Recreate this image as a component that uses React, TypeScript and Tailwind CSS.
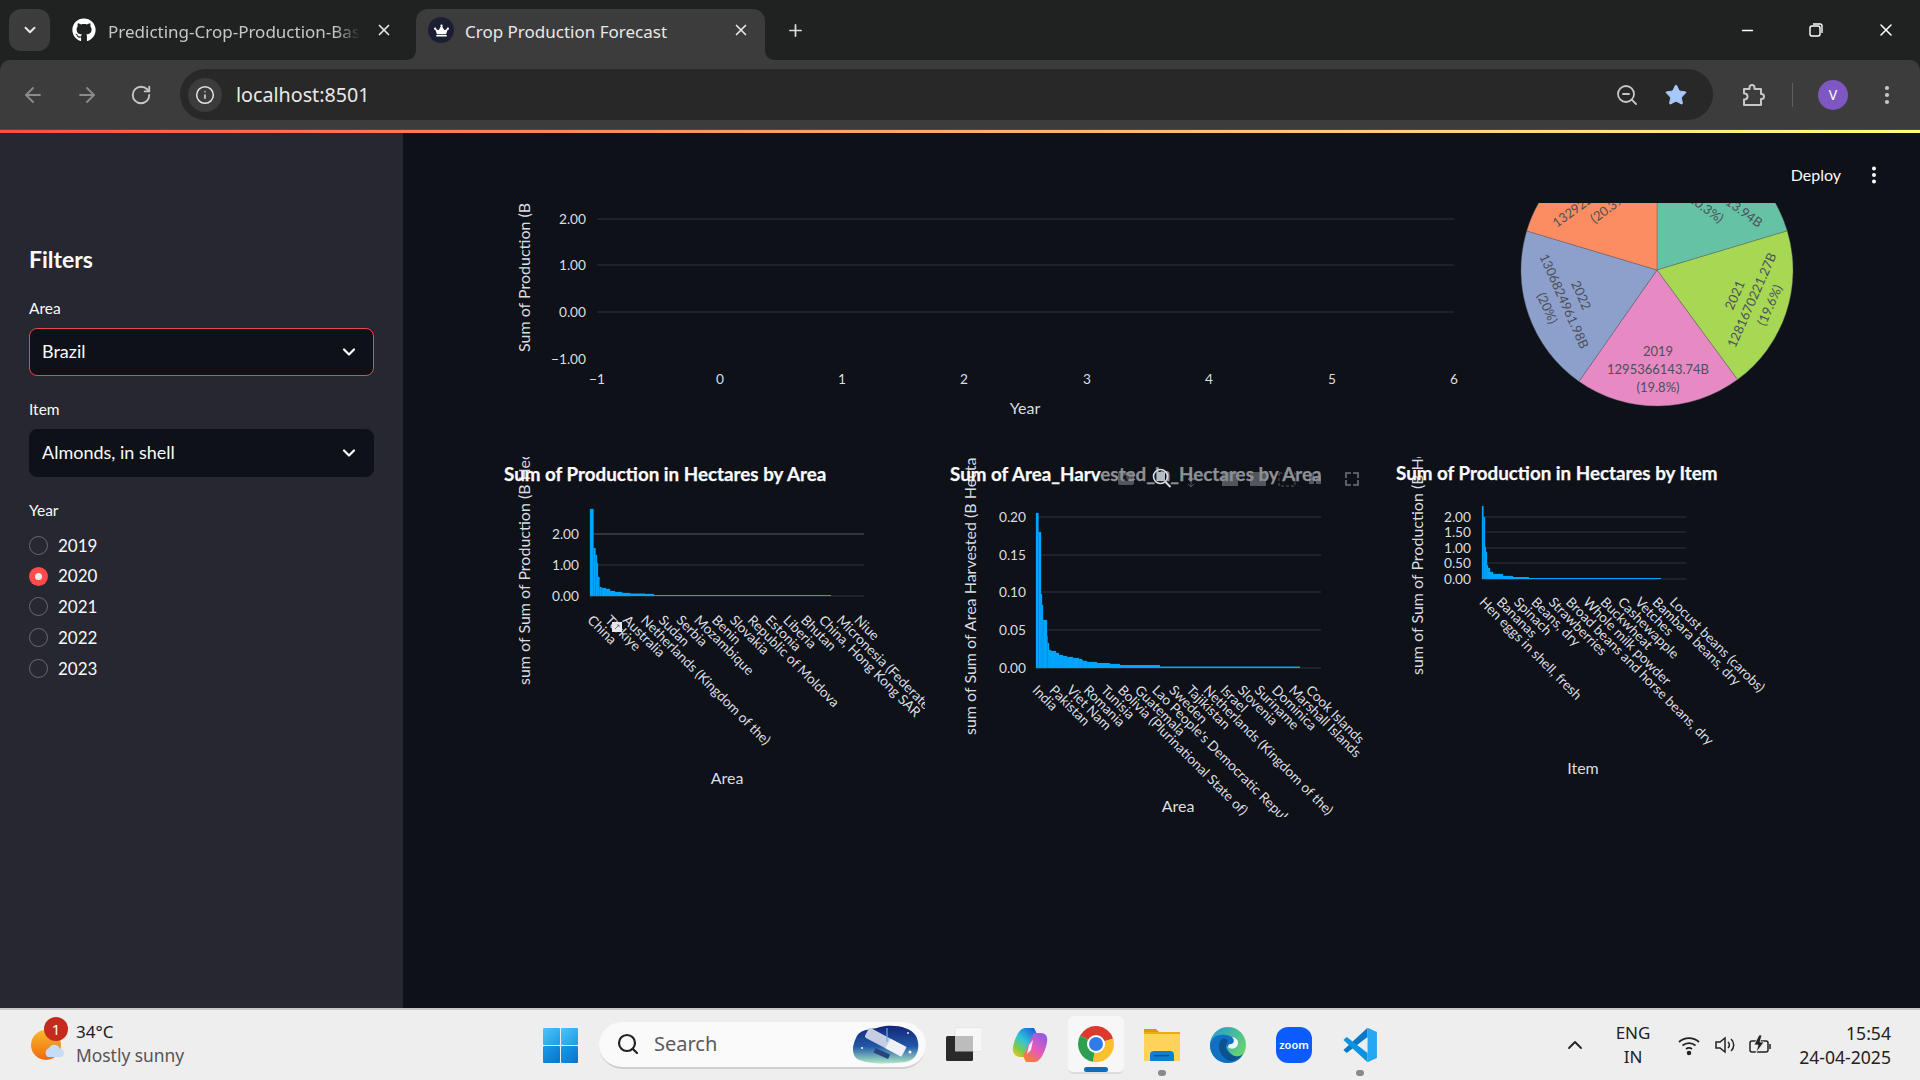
import React from "react";
import { ChevronDown, X, Plus, ArrowLeft, ArrowRight, RotateCw, Info, ZoomOut, Star, MoreVertical, Minus, Search, ChevronUp } from "lucide-react";
import { FaGithub, FaCrown } from "react-icons/fa";

const st = "font-['Lato',sans-serif]";
const ui = "font-['Noto_Sans',sans-serif]";
const tick = `fill-[#dcdde0] text-[13.7px] ${st}`;
const axis = `fill-[#dcdde0] text-[16px] ${st}`;
const title = `fill-[#fafafa] stroke-[#fafafa] [stroke-width:0.25px] text-[18.8px] font-bold ${st}`;

function YTicks({ x, x1, x2, items }: { x: number; x1: number; x2: number; items: [string, number][] }) {
  return (
    <>
      {items.map(([t, y]) => (
        <g key={t}>
          <line x1={x1} x2={x2} y1={y} y2={y} stroke="#31333c" strokeWidth="1" />
          <text x={x} y={y + 5} textAnchor="end" className={tick}>{t}</text>
        </g>
      ))}
    </>
  );
}

function XLabels({ labels, x, y, step }: { labels: string[]; x: number; y: number; step: number }) {
  return (
    <>
      {labels.map((l, i) => {
        const px = x + i * step;
        return (
          <text key={l} x={px} y={y} transform={`rotate(45 ${px} ${y})`} className={tick}>{l}</text>
        );
      })}
    </>
  );
}

function Bars({ x0, base, steps }: { x0: number; base: number; steps: [number, number][] }) {
  let prev = x0;
  return (
    <>
      {steps.map(([xe, top], i) => {
        const r = (
          <rect key={i} x={prev} y={top} width={xe - prev} height={base - top} fill="#00a6ff" stroke="#0a94e4" strokeWidth={xe - prev < 12 ? 0.3 : 0} />
        );
        prev = xe;
        return r;
      })}
    </>
  );
}

function YTitle({ x, y, text }: { x: number; y: number; text: string }) {
  return <text x={x} y={y} transform={`rotate(-90 ${x} ${y})`} className={axis}>{text}</text>;
}

function LineChart() {
  const xs = [597, 720, 842, 964, 1087, 1209, 1332, 1454];
  return (
    <svg viewBox="490 203 990 217" className="w-[990px] h-[217px] shrink-0">
      <YTicks x={586} x1={597} x2={1454} items={[["2.00", 219], ["1.00", 265], ["0.00", 312]]} />
      <text x={586} y={364} textAnchor="end" className={tick}>−1.00</text>
      {xs.map((x, i) => (
        <text key={x} x={x} y={384} textAnchor="middle" className={tick}>{i === 0 ? "−1" : i - 1}</text>
      ))}
      <text x={1025} y={414} textAnchor="middle" className={axis}>Year</text>
      <YTitle x={530} y={352} text="Sum of Production (B" />
    </svg>
  );
}

function polar(a: number, r = 136) {
  const t = (a * Math.PI) / 180;
  return [1657 + r * Math.sin(t), 270 - r * Math.cos(t)];
}
function Slice({ a, b, fill }: { a: number; b: number; fill: string }) {
  const [x1, y1] = polar(a);
  const [x2, y2] = polar(b);
  return <path d={`M1657 270L${x1} ${y1}A136 136 0 0 1 ${x2} ${y2}Z`} fill={fill} stroke="#5b6068" strokeWidth="0.4" />;
}
function PL({ x, y, r, t }: { x: number; y: number; r: number; t: string }) {
  return (
    <text x={x} y={y} textAnchor="middle" transform={`rotate(${r} ${x} ${y})`} className={`fill-[#4c5058] text-[13px] ${st}`}>{t}</text>
  );
}

function PieChart() {
  return (
    <svg viewBox="1480 203 340 217" className="w-[340px] h-[217px] shrink-0">
      <Slice a={0} b={73.3} fill="#66c2a5" />
      <Slice a={73.3} b={143.7} fill="#a6d854" />
      <Slice a={143.7} b={215} fill="#e78ac3" />
      <Slice a={215} b={286.7} fill="#8da0cb" />
      <Slice a={286.7} b={360} fill="#fc8d62" />
      <PL x={1717} y={198} r={36} t="1329220513.94B" />
      <PL x={1702} y={211} r={36} t="(20.3%)" />
      <PL x={1598} y={198} r={-36} t="1329220513.94B" />
      <PL x={1612} y={211} r={-36} t="(20.3%)" />
      <PL x={1658} y={356} r={0} t="2019" />
      <PL x={1658} y={374} r={0} t="1295366143.74B" />
      <PL x={1658} y={392} r={0} t="(19.8%)" />
      <PL x={1577} y={297} r={66} t="2022" />
      <PL x={1560} y={303} r={66} t="1306824961.98B" />
      <PL x={1543} y={310} r={66} t="(20%)" />
      <PL x={1739} y={297} r={-66} t="2021" />
      <PL x={1756} y={302} r={-66} t="1281670221.27B" />
      <PL x={1774} y={307} r={-66} t="(19.6%)" />
    </svg>
  );
}

function AreaChartA() {
  return (
    <svg viewBox="490 457 435 360" className="w-[435px] h-[360px] shrink-0">
      <YTitle x={530} y={685} text="sum of Sum of Production (B Hectares)" />
      <YTicks x={579} x1={590} x2={864} items={[["2.00", 534], ["1.00", 565], ["0.00", 596]]} />
      <line x1={593} x2={864} y1={534} y2={534} stroke="#33353e" strokeWidth="2" />
      <Bars x0={590} base={596} steps={[[593.5, 509], [595.5, 548], [597, 555], [598, 563], [599.5, 577], [601.5, 587], [606, 588], [610, 589], [615, 591], [622, 592], [630, 593], [645, 593.5], [654, 594], [831, 595]]} />
      <XLabels x={586.5} y={621} step={17.8} labels={["China", "Türkiye", "Australia", "Netherlands (Kingdom of the)", "Sudan", "Serbia", "Mozambique", "Benin", "Slovakia", "Republic of Moldova", "Estonia", "Liberia", "Bhutan", "China, Hong Kong SAR", "Micronesia (Federated States of)", "Niue"]} />
      <rect x={612} y={622} width={10} height={10} fill="#e5e7ee" />
      <path d="M615 629l4-4M619 625h-2M619 625v2" stroke="#666" strokeWidth="0.8" fill="none" />
      <text x={727} y={784} textAnchor="middle" className={axis}>Area</text>
      <text x={504} y={481} className={title}>Sum of Production in Hectares by Area</text>
    </svg>
  );
}

function ModeBar() {
  const c = "#8a8d94";
  return (
    <>
      <g opacity="0.55">
        <rect x={1118} y={472} width={16} height={13} rx="2" fill={c} />
        <circle cx={1126} cy={478} r={3} fill="#0e1117" />
        <rect x={1188} y={478} width={7} height={2} fill={c} />
        <path d="M1191 480v6M1188 484l3 3 3-3" stroke={c} fill="none" />
        <rect x={1222} y={472} width={16} height={14} fill={c} />
        <rect x={1250} y={472} width={16} height={14} fill={c} />
        <rect x={1279} y={473} width={16} height={13} fill="none" stroke={c} strokeDasharray="3 2" />
        <rect x={1309} y={473} width={5} height={11} fill={c} />
        <rect x={1316} y={476} width={5} height={8} fill={c} />
      </g>
      <rect x={1157} y={472} width={8} height={9} fill="#b9bbc2" />
      <circle cx={1160.5} cy={476.5} r={7} fill="none" stroke="#dfe0e4" strokeWidth="1.6" />
      <path d="M1165.5 482l5 5" stroke="#dfe0e4" strokeWidth="2" />
      <path d="M1346 478v-5h5M1353 473h5v5M1358 480v5h-5M1351 485h-5v-5" stroke="#6f7279" strokeWidth="1.6" fill="none" />
    </>
  );
}

function AreaChartB() {
  return (
    <svg viewBox="930 457 445 360" className="w-[445px] h-[360px] shrink-0">
      <YTitle x={976} y={735} text="sum of Sum of Area Harvested (B Hectares)" />
      <YTicks x={1026} x1={1036} x2={1321} items={[["0.20", 517], ["0.15", 555], ["0.10", 592], ["0.05", 630], ["0.00", 668]]} />
      <Bars x0={1036} base={668} steps={[[1038.5, 513], [1041, 532], [1042, 594], [1043, 605], [1044, 620], [1047, 620], [1047.5, 636], [1049, 643], [1051, 650], [1056, 651], [1059, 653], [1063, 655], [1067, 656], [1073, 657], [1079, 658], [1082, 659], [1083, 660], [1087, 661], [1097, 662], [1110, 663], [1120, 664], [1160, 665], [1300, 666.5]]} />
      <XLabels x={1031.5} y={691} step={17.1} labels={["India", "Pakistan", "Viet Nam", "Romania", "Tunisia", "Bolivia (Plurinational State of)", "Guatemala", "Lao People's Democratic Republic", "Sweden", "Tajikistan", "Netherlands (Kingdom of the)", "Israel", "Slovenia", "Suriname", "Dominica", "Marshall Islands", "Cook Islands"]} />
      <text x={1178} y={812} textAnchor="middle" className={axis}>Area</text>
      <text x={950} y={481} className={title}>Sum of Area_Harv<tspan className="fill-[#8f9196] stroke-[#8f9196]">ested_in_Hectares by Area</tspan></text>
      <ModeBar />
    </svg>
  );
}

function AreaChartC() {
  return (
    <svg viewBox="1380 457 420 360" className="w-[420px] h-[360px] shrink-0">
      <YTitle x={1423} y={675} text="sum of Sum of Production (B Hectares)" />
      <YTicks x={1471} x1={1482} x2={1686} items={[["2.00", 517], ["1.50", 532], ["1.00", 548], ["0.50", 563], ["0.00", 579]]} />
      <Bars x0={1482} base={579} steps={[[1483.5, 506], [1485, 517], [1486, 547], [1487, 552], [1488, 565], [1490, 568], [1493, 572], [1503, 574], [1513, 576], [1529, 577], [1661, 578]]} />
      <XLabels x={1478.5} y={603} step={17.3} labels={["Hen eggs in shell, fresh", "Bananas", "Spinach", "Beans, dry", "Strawberries", "Broad beans and horse beans, dry", "Whole milk powder", "Buckwheat", "Cashewapple", "Vetches", "Bambara beans, dry", "Locust beans (carobs)"]} />
      <text x={1583} y={774} textAnchor="middle" className={axis}>Item</text>
      <text x={1396} y={480} className={title}>Sum of Production in Hectares by Item</text>
    </svg>
  );
}

function Select({ value, red }: { value: string; red?: boolean }) {
  return (
    <div className={`mt-[10px] h-[48px] rounded-[8px] bg-[#0e1117] flex items-center pl-[12px] pr-[14px] border ${red ? "border-[#e5484d]" : "border-[#0e1117]"}`}>
      <span className="flex-1 -mt-[2px] text-[18px] text-[#fafafa]">{value}</span>
      <ChevronDown size={20} strokeWidth={2.6} className="text-[#fafafa]" />
    </div>
  );
}

function Radio({ label, on }: { label: string; on?: boolean }) {
  return (
    <div className="h-[30.8px] flex items-center gap-[10px]">
      {on ? (
        <span className="w-[19px] h-[19px] rounded-full bg-[#ff4b4b] flex items-center justify-center">
          <span className="w-[7px] h-[7px] rounded-full bg-[#f4e9e9]" />
        </span>
      ) : (
        <span className="w-[19px] h-[19px] rounded-full border border-[#666872]" />
      )}
      <span className="text-[17px] text-[#fafafa]">{label}</span>
    </div>
  );
}

function Sidebar() {
  return (
    <aside className={`w-[403px] shrink-0 bg-[#262730] px-[29px] pt-[111px] flex flex-col ${st}`}>
      <div className="h-[30px] leading-[30px] text-[23px] font-bold text-[#fafafa]">Filters</div>
      <div className="mt-[24px] h-[20px] leading-[20px] text-[15.5px] text-[#fafafa]">Area</div>
      <Select value="Brazil" red />
      <div className="mt-[23px] h-[20px] leading-[20px] text-[15.5px] text-[#fafafa]">Item</div>
      <Select value="Almonds, in shell" />
      <div className="mt-[23px] h-[20px] leading-[20px] text-[15.5px] text-[#fafafa]">Year</div>
      <div className="mt-[10px] flex flex-col">
        <Radio label="2019" />
        <Radio label="2020" on />
        <Radio label="2021" />
        <Radio label="2022" />
        <Radio label="2023" />
      </div>
    </aside>
  );
}

function Flare({ side }: { side: "l" | "r" }) {
  return (
    <svg viewBox="0 0 10 10" className={`absolute bottom-0 w-[10px] h-[10px] ${side === "l" ? "-left-[10px]" : "-right-[10px]"}`}>
      <path d={side === "l" ? "M10 0V10H0C6 10 10 6 10 0Z" : "M0 0V10H10C4 10 0 6 0 0Z"} fill="#3c3c3c" />
    </svg>
  );
}

function TabStrip() {
  return (
    <div className={`h-[60px] shrink-0 bg-[#202222] flex items-start pt-[9px] ${ui}`}>
      <div className="ml-[9px] w-[41px] h-[42px] rounded-[12px] bg-[#3c3c3c] flex items-center justify-center">
        <ChevronDown size={18} strokeWidth={2.6} className="text-[#e8e8e8]" />
      </div>
      <div className="w-[366px] h-[42px] pl-[22px] flex items-center">
        <FaGithub size={24} className="text-white shrink-0" />
        <span className="ml-[12px] mt-[3px] w-[252px] overflow-hidden whitespace-nowrap text-[17px] text-[#c7c7c7] [mask-image:linear-gradient(90deg,#000_90%,transparent)]">Predicting-Crop-Production-Based</span>
        <X size={18} strokeWidth={2.2} className="ml-[15px] text-[#e8e8e8] shrink-0" />
      </div>
      <div className="relative w-[349px] h-[51px] bg-[#3c3c3c] rounded-t-[12px] pl-[12px]">
        <Flare side="l" />
        <Flare side="r" />
        <div className="h-[42px] flex items-center">
          <span className="w-[26px] h-[26px] rounded-full bg-[#1c1f33] flex items-center justify-center shrink-0">
            <FaCrown size={15} className="text-white" />
          </span>
          <span className="ml-[11px] mt-[3px] w-[267px] whitespace-nowrap text-[17px] text-[#e8e8e8]">Crop Production Forecast</span>
          <X size={18} strokeWidth={2.2} className="text-[#e8e8e8] shrink-0" />
        </div>
      </div>
      <div className="h-[42px] ml-[21px] flex items-center">
        <Plus size={19} strokeWidth={2.2} className="text-[#dcdcdc]" />
      </div>
      <div className="ml-auto mr-[24px] h-[42px] flex items-center text-white">
        <Minus size={17} strokeWidth={2} />
        <svg viewBox="0 0 16 16" className="w-[16px] h-[16px] ml-[52px]" fill="none" stroke="#fff" strokeWidth="1.4">
          <rect x="2" y="4" width="10" height="10" rx="2" />
          <path d="M5 2h7a2 2 0 0 1 2 2v7" />
        </svg>
        <X size={20} strokeWidth={1.8} className="ml-[52px]" />
      </div>
    </div>
  );
}

function Toolbar() {
  return (
    <div className={`h-[70px] shrink-0 bg-[#202222] ${ui}`}>
      <div className="h-full bg-[#3c3c3c] rounded-t-[10px] flex items-center border-b border-[#4a4a4a]">
        <ArrowLeft size={24} strokeWidth={1.8} className="ml-[21px] text-[#8b8b8b]" />
        <ArrowRight size={24} strokeWidth={1.8} className="ml-[30px] text-[#8b8b8b]" />
        <RotateCw size={22} strokeWidth={2} className="ml-[31px] text-[#c7c7c7]" />
        <div className="ml-[28px] w-[1533px] h-[51px] rounded-full bg-[#282828] flex items-center">
          <span className="ml-[8px] w-[34px] h-[34px] rounded-full bg-[#3c3c3c] flex items-center justify-center">
            <Info size={20} strokeWidth={1.8} className="text-[#e3e3e3]" />
          </span>
          <span className="ml-[14px] text-[19.7px] text-[#e8e8e8]">localhost:8501</span>
          <ZoomOut size={24} strokeWidth={1.8} className="ml-auto text-[#c7c7c7]" />
          <Star size={24} fill="#a8c7fa" strokeWidth={1} className="ml-[25px] mr-[25px] text-[#a8c7fa]" />
        </div>
        <svg viewBox="0 0 24 24" className="ml-[28px] w-[24px] h-[24px]" fill="none" stroke="#c7c7c7" strokeWidth="2" strokeLinejoin="round">
          <path d="M3 6h5.5V4.5a2.5 2.5 0 0 1 5 0V6H20v5h0.5a2.5 2.5 0 0 1 0 5H20v6H3v-5.5h0.5a3 3 0 0 0 0-6H3Z" />
        </svg>
        <span className="ml-[27px] w-[1px] h-[24px] bg-[#5e5e5e]" />
        <span className="ml-[25px] w-[30px] h-[30px] rounded-full bg-[#7e57c2] text-white text-[14px] flex items-center justify-center">V</span>
        <MoreVertical size={24} strokeWidth={2.2} className="ml-[27px] text-[#c7c7c7]" />
      </div>
    </div>
  );
}

function WeatherIcon() {
  return (
    <div className="relative w-[36px] h-[36px] shrink-0">
      <svg viewBox="0 0 36 36" className="w-[36px] h-[36px]">
        <defs>
          <linearGradient id="sun" x1="0" y1="0" x2="0" y2="1">
            <stop offset="0" stopColor="#f9b928" />
            <stop offset="1" stopColor="#ee6a12" />
          </linearGradient>
        </defs>
        <circle cx="15" cy="18" r="15" fill="url(#sun)" />
        <path d="M17 30a5 5 0 0 1 1-9 6 6 0 0 1 11 1 4 4 0 0 1 0 8Z" fill="#c6dcf4" />
      </svg>
      <span className="absolute left-[13px] -top-[10px] w-[24px] h-[24px] rounded-full bg-[#c42b1c] text-white text-[15px] flex items-center justify-center">1</span>
    </div>
  );
}

function WinIcon() {
  return (
    <svg viewBox="0 0 35 35" className="w-[35px] h-[35px] shrink-0">
      <defs>
        <linearGradient id="w1" x1="0" y1="0" x2="1" y2="1">
          <stop offset="0" stopColor="#4fc3f7" />
          <stop offset="1" stopColor="#1a9be6" />
        </linearGradient>
        <linearGradient id="w2" x1="0" y1="0" x2="1" y2="1">
          <stop offset="0" stopColor="#1a9be6" />
          <stop offset="1" stopColor="#0673cf" />
        </linearGradient>
      </defs>
      <rect x="0" y="0" width="17" height="17" rx="1" fill="url(#w1)" />
      <rect x="18" y="0" width="17" height="17" rx="1" fill="url(#w1)" />
      <rect x="0" y="18" width="17" height="17" rx="1" fill="url(#w2)" />
      <rect x="18" y="18" width="17" height="17" rx="1" fill="url(#w2)" />
    </svg>
  );
}

function SatelliteArt() {
  return (
    <svg viewBox="0 0 70 40" className="w-[70px] h-[40px] shrink-0">
      <defs>
        <linearGradient id="sky" x1="0" y1="0" x2="0" y2="1">
          <stop offset="0" stopColor="#14247a" />
          <stop offset="0.55" stopColor="#2159a6" />
          <stop offset="1" stopColor="#aee8c6" />
        </linearGradient>
      </defs>
      <path d="M6 14C10 4 22 6 30 3 42 0 60 2 66 12 71 22 68 36 56 38 42 40 14 41 6 34 1 28 3 20 6 14Z" fill="url(#sky)" />
      <g transform="rotate(28 36 19)">
        <rect x="14" y="13" width="42" height="11" rx="2" fill="#c5cde0" />
        <rect x="38" y="13" width="18" height="11" fill="#eef1f7" />
      </g>
      <rect x="24" y="27" width="16" height="5" fill="#27447f" transform="rotate(24 32 29)" />
      <path d="M37 4v14" stroke="#5db1e8" strokeWidth="1.2" />
      <circle cx="60" cy="28" r="1.5" fill="#fff" />
      <circle cx="12" cy="24" r="1" fill="#fff" />
      <circle cx="58" cy="9" r="1" fill="#dfe9ff" />
    </svg>
  );
}

function TaskView() {
  return (
    <svg viewBox="0 0 40 36" className="w-[40px] h-[36px] shrink-0">
      <rect x="13" y="0.5" width="27" height="24" rx="1" fill="#f7f7f7" stroke="#e2e2e2" strokeWidth="0.8" />
      <rect x="4" y="9" width="27" height="25" rx="1.5" fill="#2a2a2a" />
      <rect x="13" y="9" width="18" height="15.5" fill="#bcbcbc" />
    </svg>
  );
}

function Copilot() {
  return (
    <svg viewBox="0 0 36 36" className="w-[36px] h-[36px] shrink-0">
      <defs>
        <linearGradient id="c1" x1="0.8" y1="0" x2="0.1" y2="1">
          <stop offset="0" stopColor="#1d63d8" />
          <stop offset="0.45" stopColor="#31c4d8" />
          <stop offset="0.75" stopColor="#7ecb4a" />
          <stop offset="1" stopColor="#f7c518" />
        </linearGradient>
        <linearGradient id="c2" x1="0.8" y1="0.1" x2="0.2" y2="1">
          <stop offset="0" stopColor="#9a5be0" />
          <stop offset="0.5" stopColor="#e45bbc" />
          <stop offset="1" stopColor="#f7822b" />
        </linearGradient>
      </defs>
      <path d="M13 1H22L25 7 14 30H9C3 30 0 26 1 20 2 13 7 1 13 1Z" fill="url(#c1)" />
      <path d="M23 35H14L11 29 22 6H29C34 6 36 10 35 15 34 22 29 35 23 35Z" fill="url(#c2)" />
      <path d="M17 18 21 13 19 23 15 27Z" fill="#f5eef5" />
    </svg>
  );
}

function ChromeLogo() {
  const R = 18;
  const pt = (a: number) => {
    const t = (a * Math.PI) / 180;
    return `${18 + R * Math.sin(t)} ${18 - R * Math.cos(t)}`;
  };
  return (
    <svg viewBox="0 0 36 36" className="w-[36px] h-[36px]">
      <path d={`M18 18L${pt(-62)}A18 18 0 0 1 ${pt(72)}Z`} fill="#dd3a2e" />
      <path d={`M18 18L${pt(72)}A18 18 0 0 1 ${pt(190)}Z`} fill="#fbc02d" />
      <path d={`M18 18L${pt(190)}A18 18 0 0 1 ${pt(298)}Z`} fill="#2e9e4f" />
      <circle cx="18" cy="18" r="9" fill="#fff" />
      <circle cx="18" cy="18" r="7" fill="#2f7bea" />
    </svg>
  );
}

function Folder() {
  return (
    <svg viewBox="0 0 36 36" className="w-[36px] h-[36px]">
      <path d="M0 2h12l4 4H0Z" fill="#d99a0c" />
      <rect x="0" y="5" width="36" height="29" fill="#fdd35a" />
      <rect x="0" y="5" width="36" height="2" fill="#eaa916" />
      <path d="M6 34V28a4 4 0 0 1 4-4h16a4 4 0 0 1 4 4v6Z" fill="#0e7fd0" />
      <rect x="10" y="28" width="15" height="1.4" fill="#0b4f8d" />
    </svg>
  );
}

function Edge() {
  return (
    <svg viewBox="0 0 36 36" className="w-[36px] h-[36px]">
      <defs>
        <linearGradient id="e1" x1="0" y1="0" x2="1" y2="0.7">
          <stop offset="0" stopColor="#1c9ad8" />
          <stop offset="1" stopColor="#6dd66a" />
        </linearGradient>
      </defs>
      <circle cx="18" cy="18" r="18" fill="url(#e1)" />
      <path d="M0 18C1 9 9 7 16 8 23 9 28 14 26 19 24 22 19 22 18 20 14 16 18 26 24 29 28 31 32 29 33 27 30 33 24 36 18 36 7 36 0 28 0 18Z" fill="#1170c4" />
      <path d="M12 12C7 16 8 27 17 33 22 36 29 32 33 27 30 30 25 30 22 28 16 25 14 18 18 14 17 12 14 11 12 12Z" fill="#0b528f" />
      <path d="M18 20C20 23 27 22 28 17 29 13 25 10 22 10 25 13 24 17 21 17 19 17 18 18 18 20Z" fill="#eef7f7" />
    </svg>
  );
}

function VSCode() {
  return (
    <svg viewBox="0 0 100 100" className="w-[36px] h-[36px]">
      <polygon points="71,2 71,28 13,72 4,64" fill="#0a78c6" />
      <polygon points="71,98 71,72 13,28 4,36" fill="#0a93e0" />
      <polygon points="71,2 97,14 97,86 71,98" fill="#25a7f1" />
    </svg>
  );
}

function Dot() {
  return <span className="absolute left-1/2 -translate-x-1/2 top-[43px] w-[8px] h-[6px] rounded-full bg-[#8a8a8a]" />;
}

function Taskbar() {
  return (
    <div className={`h-[72px] shrink-0 bg-[#eeeeee] border-t-2 border-[#c8c8c8] flex items-center ${ui}`}>
      <div className="w-[543px] shrink-0 pl-[31px] flex items-center">
        <WeatherIcon />
        <div className="ml-[9px] -mt-[3px] flex flex-col leading-none">
          <span className="text-[17px] text-[#1c1c1c]">34°C</span>
          <span className="mt-[7px] text-[17.4px] text-[#555555]">Mostly sunny</span>
        </div>
      </div>
      <WinIcon />
      <div className="ml-[21px] w-[327px] h-[47px] shrink-0 rounded-full bg-[#fafafa] border-b-2 border-[#cfcfcf] flex items-center pl-[17px] pr-[6px]">
        <Search size={24} strokeWidth={2.2} className="text-[#222222]" />
        <span className="ml-[14px] text-[20px] text-[#5a5a5a] flex-1">Search</span>
        <SatelliteArt />
      </div>
      <span className="ml-[16px]"><TaskView /></span>
      <span className="ml-[30px]"><Copilot /></span>
      <div className="relative ml-[20px] w-[56px] h-[58px] rounded-[6px] bg-[#f7f7f7] border-b-2 border-[#dcdcdc] flex items-center justify-center shrink-0">
        <ChromeLogo />
        <span className="absolute left-[16px] bottom-0 w-[24px] h-[5px] rounded-full bg-[#0f6cbd]" />
      </div>
      <div className="relative ml-[20px] w-[36px] h-[36px] shrink-0"><Folder /><Dot /></div>
      <div className="ml-[30px] w-[36px] h-[36px] shrink-0"><Edge /></div>
      <div className="ml-[30px] w-[36px] h-[36px] shrink-0 rounded-[12px] bg-[#0b5cff] flex items-center justify-center text-white text-[11px] font-semibold">zoom</div>
      <div className="relative ml-[30px] w-[36px] h-[36px] shrink-0"><VSCode /><Dot /></div>
      <ChevronUp size={24} strokeWidth={1.8} className="ml-[185px] text-[#222222] shrink-0" />
      <div className="ml-[25px] w-[42px] flex flex-col items-center text-[17px] leading-[24px] text-[#222222]">
        <span>ENG</span>
        <span>IN</span>
      </div>
      <svg viewBox="0 0 24 24" className="ml-[23px] w-[24px] h-[24px]" fill="none" stroke="#222" strokeWidth="1.7">
        <path d="M2 9a15 15 0 0 1 20 0M5.5 12.5a10 10 0 0 1 13 0M9 16a5 5 0 0 1 6 0" />
        <circle cx="12" cy="20" r="1.4" fill="#222" />
      </svg>
      <svg viewBox="0 0 24 24" className="ml-[12px] w-[24px] h-[24px]" fill="none" stroke="#222" strokeWidth="1.5">
        <path d="M3 9h4l5-4v14l-5-4H3Z" />
        <path d="M15 9a4 4 0 0 1 0 6M18 6a8 8 0 0 1 0 12" />
      </svg>
      <svg viewBox="0 0 24 24" className="ml-[11px] w-[24px] h-[24px]" fill="none" stroke="#222" strokeWidth="1.5">
        <rect x="2" y="8" width="18" height="11" rx="2" />
        <path d="M22 11v5" />
        <path d="M11 2 6 12h4l-2 8 8-11h-4l2-7Z" fill="#222" stroke="#eee" strokeWidth="0.8" />
      </svg>
      <div className="ml-auto mr-[29px] flex flex-col items-end text-[17.6px] leading-[24px] text-[#222222]">
        <span>15:54</span>
        <span>24-04-2025</span>
      </div>
    </div>
  );
}

export default function App() {
  return (
    <div className="w-[1920px] h-[1080px] flex flex-col overflow-hidden bg-[#0e1117]">
      <TabStrip />
      <Toolbar />
      <div className="h-[3px] shrink-0 bg-gradient-to-r from-[#ff4b4b] to-[#fffd80]" />
      <div className="flex-1 flex min-h-0">
        <Sidebar />
        <main className="relative flex-1 bg-[#0e1117] pt-[70px] pl-[87px] overflow-hidden">
          <div className={`absolute right-[35px] top-[30px] flex items-center gap-[22px] text-[16px] text-[#fafafa] ${st}`}>
            <span>Deploy</span>
            <MoreVertical size={22} strokeWidth={2.4} />
          </div>
          <div className="flex">
            <LineChart />
            <PieChart />
          </div>
          <div className="flex gap-[5px] mt-[37px]">
            <AreaChartA />
            <AreaChartB />
            <AreaChartC />
          </div>
        </main>
      </div>
      <Taskbar />
    </div>
  );
}
